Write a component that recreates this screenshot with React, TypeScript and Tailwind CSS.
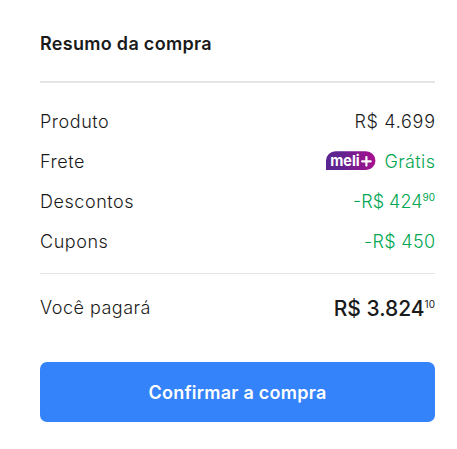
import type { ReactNode } from 'react';

function MeliPlus() {
    return (
        <svg width="50" height="20" viewBox="0 0 50 20" className="mr-[8px] shrink-0 -translate-y-px" role="img" aria-label="meli+">
            <defs>
                <linearGradient id="meli" x1="0" y1="0" x2="50" y2="0" gradientUnits="userSpaceOnUse">
                    <stop offset="0" stopColor="#5a2591" />
                    <stop offset="0.3" stopColor="#60238f" />
                    <stop offset="1" stopColor="#aa108f" />
                </linearGradient>
            </defs>
            <path d="M9.5 0.2H40a9.4 9.4 0 0 1 0 18.9H0V9.7A9.5 9.5 0 0 1 9.5 0.2Z" fill="url(#meli)" />
            <text x="4.2" y="14.8" textLength="29.5" lengthAdjust="spacingAndGlyphs" fill="#fff" className="font-['Inter',sans-serif] text-[15px] font-bold">
                meli
            </text>
            <path d="M40.4 6v8.6M36.1 10.3h8.6" stroke="#fff" strokeWidth="2.2" strokeLinecap="round" />
        </svg>
    );
}

function Row({ label, children }: { label: string; children: ReactNode }) {
    return (
        <div className="flex h-10 items-center justify-between">
            <dt className="tracking-[0.55px]">{label}</dt>
            <dd className="flex items-center">{children}</dd>
        </div>
    );
}

export default function App() {
    return (
        <main className="h-[449px] w-[457px] bg-white pl-10 pr-[22px] pt-8 font-['Inter',sans-serif] text-[18px] font-light leading-6 text-[#1a1a1a]">
            <h2 className="text-[18px] font-semibold tracking-[0.3px]">Resumo da compra</h2>
            <hr className="mt-[25px] border-0 border-t-2 border-[#e5e5e5]" />
            <dl className="mt-[19px]">
                <Row label="Produto">
                    <span className="-mr-[0.7px] tracking-[0.7px]">R$ 4.699</span>
                </Row>
                <Row label="Frete">
                    <MeliPlus />
                    <span className="-mr-[0.4px] tracking-[0.4px] text-[#00a650]">Grátis</span>
                </Row>
                <Row label="Descontos">
                    <span className="text-[#00a650]">-R$ 424</span>
                    <span className="relative -top-[5px] text-[10px] font-normal text-[#00a650]">90</span>
                </Row>
                <Row label="Cupons">
                    <span className="-mr-[0.3px] tracking-[0.3px] text-[#00a650]">-R$ 450</span>
                </Row>
            </dl>
            <hr className="mt-[11px] border-0 border-t border-[#e5e5e5]" />
            <div className="mt-[14px] flex h-10 items-center justify-between">
                <span className="tracking-[0.5px]">Você pagará</span>
                <span className="flex items-center pt-px text-[21px] font-medium">
                    R$ 3.824
                    <span className="relative -top-[5px] text-[10px] font-normal">10</span>
                </span>
            </div>
            <button type="button" className="mt-[34px] flex h-[60px] w-full items-center justify-center rounded-[7px] bg-[#3483fa] pt-0.5 text-[18px] font-semibold tracking-[0.25px] text-white">
                Confirmar a compra
            </button>
        </main>
    );
}
